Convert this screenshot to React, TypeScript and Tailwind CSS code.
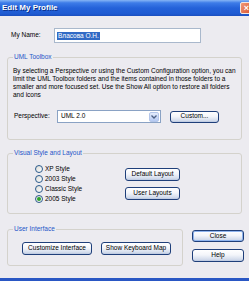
import React from 'react';

const font = "font-['Liberation_Sans',Arial,sans-serif]";

const XpButton: React.FC<{ label: string; className?: string; isDefault?: boolean }> = ({ label, className, isDefault }) => (
  <button
    className={`${className || ''} flex items-center justify-center rounded-[3px] border border-[#1f3f7a] bg-[linear-gradient(to_bottom,#ffffff_0%,#f3f5fa_45%,#d3dcec_85%,#b9c6df_100%)] text-[6.5px] leading-none text-black ${
      isDefault ? 'shadow-[inset_0_0_0_1px_#8fb4ee]' : ''
    }`}
  >
    {label}
  </button>
);

const Radio: React.FC<{ label: string; checked?: boolean }> = ({ label, checked }) => (
  <div className="flex h-[10px] items-center gap-[2px]">
    <span className="flex h-[8px] w-[8px] items-center justify-center rounded-full border border-[#2b5a8c] bg-[linear-gradient(135deg,#dcdcd6,#ffffff)]">
      {checked && <span className="h-[4px] w-[4px] rounded-full bg-[#2ea52e]" />}
    </span>
    <span className="text-[6.5px] leading-none text-black">{label}</span>
  </div>
);

const App: React.FC = () => {
  return (
    <div className={`${font} flex h-[281px] w-[249px] flex-col overflow-hidden border-b-[3px] border-[#2a57c4] bg-[#ecebf0] select-none`}>
      {/* title bar */}
      <div className="flex h-[16px] shrink-0 items-center bg-[linear-gradient(to_bottom,#86b5f5_0%,#3d7ce8_18%,#2462d9_50%,#1f5bd2_85%,#1b4fbf_100%)] pl-[2px]">
        <span className="text-[8px] font-bold leading-none text-white [text-shadow:1px_1px_0_#0b2f8a]">Edit My Profile</span>
        <span className="ml-auto mr-[-4px] flex h-[12px] w-[13px] items-center justify-center rounded-[2px] border border-[#f3e6e0] bg-[linear-gradient(135deg,#f09a78,#d9512c)] text-[9px] font-bold leading-none text-white">
          ×
        </span>
      </div>

      {/* name */}
      <div className="mt-[12px] flex h-[15px] items-center pl-[11px]">
        <span className="w-[43px] text-[6.5px] leading-none text-black">My Name:</span>
        <div className="flex h-[15px] w-[147px] items-center border border-[#a9b8cc] bg-white pl-[2px]">
          <span className="bg-[#316ac5] px-[1px] text-[6.5px] leading-[8px] text-white">Власова О.Н.</span>
        </div>
      </div>

      {/* UML toolbox */}
      <fieldset className="mt-[10px] ml-[7px] w-[235px] rounded-[3px] border border-[#d4d2cc] pt-[6px] pb-[16px] pl-[5px] pr-[4px]">
        <legend className="px-[1px] text-[6.5px] leading-[8px] text-[#1f56c8]">UML Toolbox</legend>
        <p className="text-[6.5px] leading-[8px] text-black">
          By selecting a Perspective or using the Custom Configuration option, you can limit the UML Toolbox folders and the items contained in those folders to a smaller and more focused set. Use the Show All option to restore all folders and icons
        </p>
        <div className="mt-[11px] flex h-[13px] items-center">
          <span className="w-[44px] pl-[1px] text-[6.5px] leading-none text-black">Perspective:</span>
          <div className="flex h-[13px] w-[104px] items-center border border-[#8aa2c4] bg-white">
            <span className="flex-1 pl-[3px] text-[6.5px] leading-none text-black">UML 2.0</span>
            <span className="mr-[1px] flex h-[10px] w-[10px] items-center justify-center rounded-[2px] border border-[#b4c6ea] bg-[linear-gradient(to_bottom,#e4ecfc,#b5c9f2)]">
              <svg width="6" height="4" viewBox="0 0 6 4">
                <path d="M0.5 0.5 L3 3 L5.5 0.5" stroke="#4d6185" strokeWidth="1.3" fill="none" />
              </svg>
            </span>
          </div>
          <XpButton label="Custom..." className="ml-[9px] h-[12px] w-[49px]" />
        </div>
      </fieldset>

      {/* visual style */}
      <fieldset className="mt-[9px] ml-[7px] w-[235px] rounded-[3px] border border-[#d4d2cc] pt-[7px] pb-[9px] pl-[5px]">
        <legend className="px-[1px] text-[6.5px] leading-[8px] text-[#1f56c8]">Visual Style and Layout</legend>
        <div className="flex">
          <div className="ml-[22px] flex w-[90px] flex-col">
            <Radio label="XP Style" />
            <Radio label="2003 Style" />
            <Radio label="Classic Style" />
            <Radio label="2005 Style" checked />
          </div>
          <div className="mt-[4px] flex flex-col gap-[6px]">
            <XpButton label="Default Layout" className="h-[13px] w-[55px]" />
            <XpButton label="User Layouts" className="h-[13px] w-[55px]" />
          </div>
        </div>
      </fieldset>

      {/* user interface + close/help */}
      <div className="mt-[11px] ml-[7px] flex">
        <fieldset className="w-[176px] rounded-[3px] border border-[#d4d2cc] pt-[9px] pb-[10px] pl-[5px]">
          <legend className="px-[1px] text-[6.5px] leading-[8px] text-[#1f56c8]">User Interface</legend>
          <div className="ml-[9px] flex gap-[9px]">
            <XpButton label="Customize Interface" className="h-[13px] w-[70px]" />
            <XpButton label="Show Keyboard Map" className="h-[13px] w-[70px]" />
          </div>
        </fieldset>
        <div className="ml-[9px] mt-[5px] flex flex-col gap-[7px]">
          <XpButton label="Close" isDefault className="h-[12px] w-[52px]" />
          <XpButton label="Help" className="h-[13px] w-[52px]" />
        </div>
      </div>
    </div>
  );
};

export default App;
